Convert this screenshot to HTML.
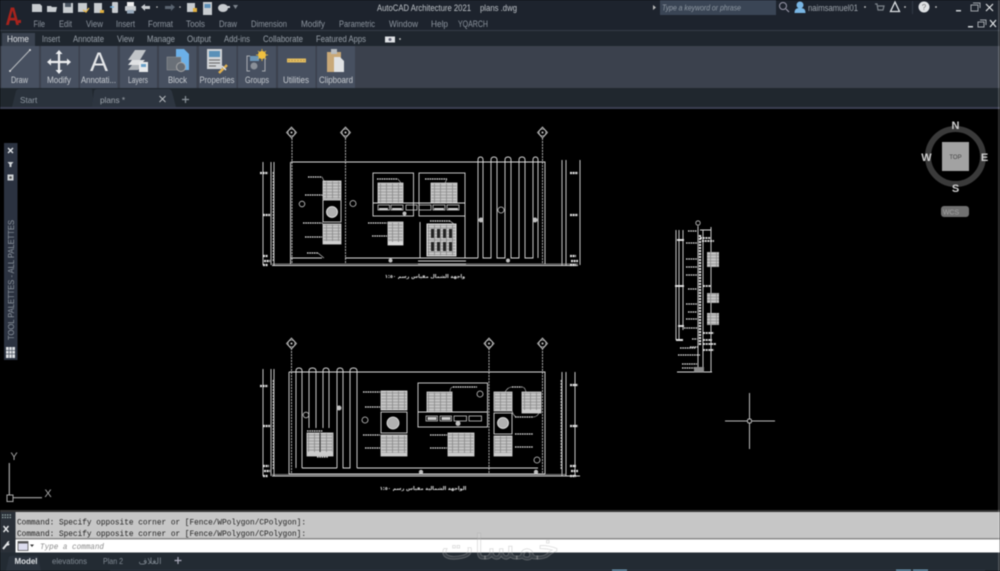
<!DOCTYPE html>
<html>
<head>
<meta charset="utf-8">
<style>
html,body{margin:0;padding:0;background:#000;width:1000px;height:571px;overflow:hidden}
svg{display:block;filter:blur(.6px)}
text{font-family:"Liberation Sans","Noto Sans CJK SC",sans-serif}
.m{font-size:8.8px;fill:#8d959f}
.r{font-size:8.8px;fill:#98a0a9}
.l{font-size:8.8px;fill:#c8ccd1;text-anchor:middle}
.b{fill:#475060}
.d{fill:none;stroke:#dcdcdc;stroke-width:.9}
.c{fill:none;stroke:#c8c8c8;stroke-width:.8}
.g{fill:none;stroke:#c4c4c4;stroke-width:.9;stroke-dasharray:2 1}
.a{fill:none;stroke:#e4e4e4;stroke-width:1.3;stroke-dasharray:1.6 .7}
.n{fill:none;stroke:#ccc;stroke-width:.6}
.w{fill:url(#win);stroke:#d8d8d8;stroke-width:.8}
.p{fill:#000;stroke:#d8d8d8;stroke-width:.9}
.q{fill:#d0d0d0}
.vc{font-size:11px;font-weight:bold;fill:#cfcfcf;text-anchor:middle}
.cm{font-family:"Liberation Mono",monospace;font-size:8.4px;fill:#222}
.i{fill:#c8ccd0}
</style>
</head>
<body>
<svg width="1000" height="571" viewBox="0 0 1000 571" xmlns="http://www.w3.org/2000/svg">
<defs>
<pattern id="win" width="6" height="6" patternUnits="userSpaceOnUse">
<rect width="6" height="6" fill="#aaaaaa"/>
<path d="M0 1.5H6M0 4.5H6" stroke="#e0e0e0" stroke-width=".8"/>
<path d="M2.5 0V6" stroke="#808080" stroke-width=".7"/>
</pattern>
</defs>

<!-- canvas -->
<rect width="1000" height="571" fill="#000"/>

<!-- title bar -->
<rect width="1000" height="30" fill="#1d232d"/>
<rect y="30" width="1000" height="1" fill="#343d47"/>
<rect y="31" width="1000" height="15" fill="#1f262e"/>

<!-- A logo -->
<text x="5.500" y="25" font-size="25" font-weight="bold" fill="#a8231d" textLength="14" lengthAdjust="spacingAndGlyphs">A</text>
<rect x="18" y="20" width="3" height="3" fill="#a8231d"/>

<!-- quick access -->
<path class="i" d="M32 4h8l2 2v6H32z"/>
<path class="i" d="M47 6h4l1 1h5l-1 5H47z"/>
<path class="i" d="M63 3h10v10H63z"/><rect x="65" y="3" width="6" height="4" fill="#4a5460"/>
<path class="i" d="M78 3h9v9h-9z"/><path d="M83 10l3 2 3-4" stroke="#e8b84a" stroke-width="1.3" fill="none"/>
<path class="i" d="M94 3h8v10h-8z"/><path d="M100 10h4v3h-4z" fill="#e0b040"/>
<rect x="112" y="2" width="6" height="11" rx="1" class="i"/><path d="M110 7h4" stroke="#6fb0e0" stroke-width="1.4"/>
<rect x="125" y="6" width="11" height="5" rx="1" class="i"/><rect x="127" y="2" width="7" height="4" fill="#eee"/><rect x="127" y="10" width="7" height="3.5" fill="#9ab"/>
<path class="i" d="M141 7l4-3v2h5v3h-5v2z"/><circle cx="157" cy="7" r=".8" fill="#ccc"/>
<path d="M175 7l-4-3v2h-6v3h6v2z" fill="#5a6470"/><circle cx="180" cy="7" r=".8" fill="#ccc"/>
<path class="i" d="M187 3h8v9h-8z"/><rect x="193" y="8" width="4" height="4" fill="#e0b040"/>
<path class="i" d="M203 2h9v13h-9z"/><rect x="204.500" y="4" width="6" height="4" fill="#5c8fb8"/>
<ellipse cx="223" cy="8" rx="5" ry="4" class="i"/><path d="M227 6h3v2h-3z" class="i"/>
<path d="M233 5h5l-2.500 4z" fill="#7d858d"/>

<text x="377" y="11" font-size="9.500" fill="#bfc4c9" textLength="94" lengthAdjust="spacingAndGlyphs">AutoCAD Architecture 2021</text>
<text x="480" y="11" font-size="9.500" fill="#bfc4c9" textLength="37" lengthAdjust="spacingAndGlyphs">plans .dwg</text>

<!-- search -->
<path d="M653 5l3 2.500-3 2.500z" fill="#bbb"/>
<rect x="660" y="0" width="116" height="15" fill="#3a4555"/>
<text x="662" y="10.500" font-size="8.200" font-style="italic" fill="#8f99a3" textLength="79" lengthAdjust="spacingAndGlyphs">Type a keyword or phrase</text>
<circle cx="783" cy="6" r="3.500" fill="none" stroke="#99a" stroke-width="1"/><path d="M786 9l3 3" stroke="#99a" stroke-width="1.200"/>
<circle cx="800" cy="5" r="3.500" fill="#79b6e4"/><path d="M794.500 13c0-4 2-5 5.500-5s5.500 1 5.500 5z" fill="#79b6e4"/>
<text x="808" y="11" font-size="8.800" fill="#a0a7ae" textLength="50" lengthAdjust="spacingAndGlyphs">naimsamuel01</text>
<circle cx="865" cy="7" r=".9" fill="#ccc"/>
<path d="M875 4h2l1 6h5l1-4h-6" stroke="#7d848b" fill="none" stroke-width="1.200"/>
<path d="M895 2l4.500 9.500h-9z" fill="none" stroke="#dfe3e6" stroke-width="1.300"/>
<circle cx="905" cy="7" r=".9" fill="#ccc"/>
<rect x="912" y="1" width="1" height="13" fill="#303844"/>
<circle cx="924" cy="7" r="5.500" fill="#dfe2e5"/><text x="924" y="10" font-size="8" fill="#777" text-anchor="middle">?</text>
<circle cx="936" cy="7" r=".9" fill="#ccc"/>
<rect x="956" y="10" width="5" height="1.500" fill="#d0d4d8"/>
<rect x="971" y="5" width="7" height="6" fill="none" stroke="#a0a5aa"/><path d="M973 3h7v5" fill="none" stroke="#a0a5aa"/>
<path d="M986 4l7 7M993 4l-7 7" stroke="#e2e4e6" stroke-width="1.200"/>
<rect x="968" y="26" width="5" height="1.500" fill="#d0d4d8"/>
<rect x="978" y="22" width="6" height="5" fill="none" stroke="#a0a5aa"/><path d="M980 20h6v5" fill="none" stroke="#a0a5aa"/>
<path d="M990 20l6 7M996 20l-6 7" stroke="#e2e4e6" stroke-width="1.200"/>

<!-- menu -->
<text class="m" x="33.500" y="27" textLength="11.500" lengthAdjust="spacingAndGlyphs">File</text>
<text class="m" x="59" y="27" textLength="13" lengthAdjust="spacingAndGlyphs">Edit</text>
<text class="m" x="86" y="27" textLength="17" lengthAdjust="spacingAndGlyphs">View</text>
<text class="m" x="116" y="27" textLength="19" lengthAdjust="spacingAndGlyphs">Insert</text>
<text class="m" x="148" y="27" textLength="25" lengthAdjust="spacingAndGlyphs">Format</text>
<text class="m" x="186" y="27" textLength="19" lengthAdjust="spacingAndGlyphs">Tools</text>
<text class="m" x="219" y="27" textLength="18" lengthAdjust="spacingAndGlyphs">Draw</text>
<text class="m" x="251" y="27" textLength="36" lengthAdjust="spacingAndGlyphs">Dimension</text>
<text class="m" x="301" y="27" textLength="24" lengthAdjust="spacingAndGlyphs">Modify</text>
<text class="m" x="339" y="27" textLength="36" lengthAdjust="spacingAndGlyphs">Parametric</text>
<text class="m" x="389" y="27" textLength="29" lengthAdjust="spacingAndGlyphs">Window</text>
<text class="m" x="431" y="27" textLength="17" lengthAdjust="spacingAndGlyphs">Help</text>
<text class="m" x="458" y="27" textLength="30" lengthAdjust="spacingAndGlyphs">YQARCH</text>

<!-- ribbon tabs -->
<rect x="2" y="33" width="33" height="13" fill="#3a424f"/>
<text x="7" y="42" font-size="8.800" fill="#dde0e3" textLength="22" lengthAdjust="spacingAndGlyphs">Home</text>
<text class="r" x="42" y="42" textLength="18" lengthAdjust="spacingAndGlyphs">Insert</text>
<text class="r" x="73" y="42" textLength="31" lengthAdjust="spacingAndGlyphs">Annotate</text>
<text class="r" x="117" y="42" textLength="17" lengthAdjust="spacingAndGlyphs">View</text>
<text class="r" x="147" y="42" textLength="28" lengthAdjust="spacingAndGlyphs">Manage</text>
<text class="r" x="187" y="42" textLength="24" lengthAdjust="spacingAndGlyphs">Output</text>
<text class="r" x="224" y="42" textLength="26" lengthAdjust="spacingAndGlyphs">Add-ins</text>
<text class="r" x="263" y="42" textLength="40" lengthAdjust="spacingAndGlyphs">Collaborate</text>
<text class="r" x="316" y="42" textLength="50" lengthAdjust="spacingAndGlyphs">Featured Apps</text>
<rect x="385" y="36.500" width="10" height="6" fill="#dfe2e5"/><circle cx="390" cy="39.500" r="1.500" fill="#667"/>
<circle cx="400" cy="39" r=".9" fill="#ccc"/>

<!-- ribbon panel -->
<rect y="46" width="1000" height="42" fill="#3b414d"/>
<rect class="b" x="1.500" y="46" width="37.500" height="42"/>
<rect class="b" x="41" y="46" width="37.500" height="42"/>
<rect class="b" x="80" y="46" width="37.500" height="42"/>
<rect class="b" x="120" y="46" width="37" height="42"/>
<rect class="b" x="159" y="46" width="37.500" height="42"/>
<rect class="b" x="199" y="46" width="37.500" height="42"/>
<rect class="b" x="238" y="46" width="38" height="42"/>
<rect class="b" x="278" y="46" width="37.500" height="42"/>
<rect class="b" x="317" y="46" width="38" height="42"/>

<!-- Draw icon -->
<path d="M10 71L30 50" stroke="#b8bcc0" stroke-width="1"/><circle cx="10" cy="71" r="1" fill="#ddd"/><circle cx="30" cy="50" r="1" fill="#ddd"/>
<!-- Modify icon -->
<path d="M59 50l3.500 4h-2.400v6.900h6.900v-2.400l4 3.500-4 3.500v-2.400h-6.900v6.900h2.400l-3.500 4-3.500-4h2.400v-6.900h-6.900v2.400l-4-3.500 4-3.500v2.400h6.900v-6.900h-2.400z" fill="#eceef0"/>
<!-- Annotate icon -->
<text x="99" y="71" font-size="27" fill="#e4e6e8" text-anchor="middle">A</text>
<!-- Layers icon -->
<path d="M128 60l7-10h11l-6 10z" fill="#c0c4c8"/>
<path d="M128 65l4-5h13l-5 5z" fill="#e0e2e4"/>
<path d="M128 70l4-5h11l-5 5z" fill="#aeb3b8"/>
<rect x="139" y="62" width="9" height="10" fill="#e8eaec"/><rect x="141" y="64" width="5" height="3" fill="#6aa0c8"/>
<!-- Block icon -->
<path d="M176 49h8l5 5v16h-13z" fill="#6cb0e8"/>
<rect x="167" y="57" width="14" height="13" fill="#6a7078" stroke="#999" stroke-width=".5"/>
<circle cx="181" cy="67" r="4.500" fill="#666c74" stroke="#a8a8a8"/>
<!-- Properties icon -->
<rect x="207" y="49" width="15" height="20" fill="#d0d3d6"/>
<rect x="209" y="51" width="11" height="6" fill="#5a90b8"/>
<path d="M209 60h11M209 63h11M209 66h7" stroke="#666" stroke-width="1"/>
<path d="M219 73l8-8" stroke="#e0b050" stroke-width="2.500"/><path d="M222 66l4 4" stroke="#ddd" stroke-width="1.500"/>
<!-- Groups icon -->
<path d="M250 56h-3v15h3M262 56h3v15h-3" fill="none" stroke="#a8adb2" stroke-width="1"/>
<rect x="250" y="56" width="9" height="5" fill="#6b96b8"/>
<circle cx="254" cy="66" r="3.500" fill="#8a9098"/>
<circle cx="262" cy="55" r="4" fill="#f0c040"/><path d="M262 49v12M256 55h12M258 51l8 8M266 51l-8 8" stroke="#f0c040" stroke-width=".8"/>
<!-- Utilities icon -->
<rect x="287" y="58.500" width="19" height="4" fill="#e0bb60"/>
<path d="M289 60v1M292 60v1M295 60v1M298 60v1M301 60v1M304 60v1" stroke="#8a7030" stroke-width=".6"/>
<!-- Clipboard icon -->
<rect x="327" y="52" width="14" height="20" fill="#c8a878"/>
<rect x="331" y="49" width="6" height="5" fill="#b8bcc0"/>
<path d="M334 57h6l4 4v11h-10z" fill="#e0e2e4"/>

<text class="l" x="19.500" y="83" textLength="17" lengthAdjust="spacingAndGlyphs">Draw</text>
<text class="l" x="59" y="83" textLength="24" lengthAdjust="spacingAndGlyphs">Modify</text>
<text class="l" x="98.500" y="83" textLength="35" lengthAdjust="spacingAndGlyphs">Annotati...</text>
<text class="l" x="138" y="83" textLength="20" lengthAdjust="spacingAndGlyphs">Layers</text>
<text class="l" x="177.500" y="83" textLength="19" lengthAdjust="spacingAndGlyphs">Block</text>
<text class="l" x="217" y="83" textLength="35" lengthAdjust="spacingAndGlyphs">Properties</text>
<text class="l" x="257" y="83" textLength="24" lengthAdjust="spacingAndGlyphs">Groups</text>
<text class="l" x="296" y="83" textLength="26" lengthAdjust="spacingAndGlyphs">Utilities</text>
<text class="l" x="336" y="83" textLength="34" lengthAdjust="spacingAndGlyphs">Clipboard</text>

<!-- file tabs -->
<rect y="88" width="1000" height="19" fill="#20272e"/>
<rect y="107" width="1000" height="2" fill="#3b3f52"/>
<path d="M12 107l4-16q1-2 3-2h73l2 18z" fill="#2a323c"/>
<path d="M92 107l2-16q1-2 3-2h72q2 0 3 3l4 15z" fill="#2d3540"/>
<text x="20" y="103" font-size="8.200" fill="#8f98a2">Start</text>
<text x="100" y="103" font-size="8.200" fill="#a0a7ae">plans *</text>
<path d="M159.500 96l6 6M165.500 96l-6 6" stroke="#b8bcc0" stroke-width="1"/>
<path d="M182 99.500h7M185.500 96v7" stroke="#8a929a" stroke-width="1.200"/>

<!-- TOOL PALETTES -->
<rect x="4" y="143" width="13.500" height="217" fill="#2b3240"/>
<path d="M8 148l5 5M13 148l-5 5" stroke="#dfe2e5" stroke-width="1.400"/>
<path d="M7.500 162h6l-2 2.500v2.500h-2v-2.500z" fill="#cfd3d6"/>
<rect x="7.500" y="174.500" width="6" height="6" fill="#cfd3d6"/><circle cx="10.500" cy="177.500" r="1.300" fill="#555"/>
<text transform="translate(14,340) rotate(-90)" font-size="8.600" fill="#8f97a0" textLength="120" lengthAdjust="spacingAndGlyphs">TOOL PALETTES - ALL PALETTES</text>
<rect x="6" y="347" width="9" height="11" fill="#dfe2e5"/>
<path d="M6 350.500h9M6 354h9M9 347v11M12 347v11" stroke="#4a5260" stroke-width=".7"/>

<!-- ELEVATION 1 -->
<g>
<path class="d" d="M263 162V265M271 162V265M274 162V265M562 160V265M566 160V265M580 160V265"/>
<path class="d" d="M272 265.500H578" stroke-width="1.500"/><path d="M272 264H578" stroke="#aaa" stroke-width=".7"/>
<path class="d" d="M291 162H545V264M290.500 162V264M291 258H322M345 258H420M465 258H478"/>
<path class="g" d="M292 138V264M345.500 138V264M542.500 138V264"/>
<g class="c"><circle cx="291.500" cy="132.500" r="3.500"/><circle cx="345.500" cy="132.500" r="3.500"/><circle cx="542.500" cy="132.500" r="3.500"/>
<path d="M291.500 127l5 5.500-5 5.500-5-5.500zM345.500 127l5 5.500-5 5.500-5-5.500zM542.500 127l5 5.500-5 5.500-5-5.500z"/></g>
<g class="q"><circle cx="291.500" cy="132.500" r="1"/><circle cx="345.500" cy="132.500" r="1"/><circle cx="542.500" cy="132.500" r="1"/></g>

<rect class="w" x="323" y="181" width="18" height="18"/>
<rect class="p" x="323" y="200" width="18" height="22"/>
<circle cx="332" cy="212" r="5.500" fill="#b0b0b0" stroke="#eee" stroke-width=".8"/>
<rect class="w" x="323" y="224" width="18" height="20"/>
<rect x="323" y="241" width="18" height="3" fill="#d0d0d0"/>

<rect class="p" x="373" y="173" width="40.500" height="43"/>
<rect class="p" x="419" y="173" width="46" height="43"/>
<path class="d" d="M373 203H465"/>
<rect class="w" x="378" y="183" width="25" height="20"/>
<rect class="w" x="431" y="183" width="26" height="20"/>
<g class="c" stroke-width=".8">
<rect x="378" y="205" width="11.500" height="5"/><rect x="391" y="205" width="12" height="5"/><rect x="406" y="205" width="11" height="5"/><rect x="419" y="205" width="12" height="5"/><rect x="433" y="205" width="12" height="5"/><rect x="447" y="205" width="12" height="5"/></g>
<rect x="379" y="208" width="9" height="2" fill="#ccc"/><rect x="392" y="208" width="10" height="2" fill="#ccc"/><rect x="434" y="208" width="10" height="2" fill="#ccc"/><rect x="448" y="208" width="10" height="2" fill="#ccc"/>
<rect class="w" x="388" y="222" width="15" height="23"/>
<rect x="388" y="242" width="15" height="3" fill="#ddd"/>

<rect x="427" y="224" width="29" height="32" fill="url(#win)" stroke="#eee" stroke-width=".9"/>
<g fill="#222"><rect x="431" y="229" width="3" height="9"/><rect x="437" y="229" width="3" height="9"/><rect x="443" y="229" width="3" height="9"/><rect x="449" y="229" width="3" height="9"/><rect x="431" y="242" width="3" height="9"/><rect x="437" y="242" width="3" height="9"/><rect x="443" y="242" width="3" height="9"/><rect x="449" y="242" width="3" height="9"/></g>
<path class="d" d="M420 258V222M465 258V216M418 258H466M418 261H466M418 264H466"/>

<path class="d" d="M478 258V160q0-3 2.500-3t2.500 3V258H491V160q0-3 3-3t3 3V258H505V160q0-3 3-3t3 3V258H519V160q0-3 3-3t3 3V258H533V160q0-3 2.500-3t2.500 3V258"/>

<g class="a">
<path d="M308 177H322M305 195H322M303 223H322M305 237H322M307 253H318"/>
<path d="M377 179H398M425 179H447M368 223H387M372 236H387M430 221H450"/>
</g>
<path class="n" d="M322 177l2 4M322 195l2 2M322 223l2 2M318 253l6 5M398 179l3 4M447 179l-2 4M450 221l4 3"/>
<g class="c"><circle cx="302" cy="204" r="2.800"/><circle cx="353" cy="203.500" r="3"/><circle cx="501" cy="210" r="3"/></g>
<g fill="#c0c0c0"><circle cx="404.500" cy="213.500" r="2"/><circle cx="481" cy="220" r="2.500"/><circle cx="535" cy="220" r="2.500"/><circle cx="390.500" cy="260.500" r="2"/><circle cx="508" cy="260.500" r="2"/></g>

<g fill="none" stroke="#e4e4e4" stroke-width="2.200" stroke-dasharray="2 .6">
<path d="M260 173H268M263 215H270M263 256H268M264 261H270M263 265H268"/>
<path d="M570 173H578M570 215H578M570 256H576M571 261H578M570 265H576"/></g>
<path class="g" d="M273 172V262M562 165V262"/>

<text x="425" y="278" font-size="5" font-weight="bold" fill="#dcdcdc" text-anchor="middle" style="font-family:'DejaVu Sans',sans-serif" direction="rtl">واجهة الشمال مقياس رسم ١:٥٠</text>
</g>

<!-- ELEVATION 2 -->
<g>
<path class="d" d="M263 369V476M271 369V476M274 369V476M562 372V476M566 372V476M575 372V476"/>
<path class="d" d="M272 476H580" stroke-width="1.500"/><path d="M272 474.500H566" stroke="#aaa" stroke-width=".7"/>
<path class="d" d="M289 372H545V474M289 372V474H545M302 468H337M357 468H538"/>
<path class="g" d="M291.500 348V474M489 348V474M542.500 348V474"/>
<g class="c"><circle cx="291.500" cy="343.500" r="3.500"/><circle cx="489" cy="343.500" r="3.500"/><circle cx="542.500" cy="343.500" r="3.500"/>
<path d="M291.500 338l5 5.500-5 5.500-5-5.500zM489 338l5 5.500-5 5.500-5-5.500zM542.500 338l5 5.500-5 5.500-5-5.500z"/></g>
<g class="q"><circle cx="291.500" cy="343.500" r="1"/><circle cx="489" cy="343.500" r="1"/><circle cx="542.500" cy="343.500" r="1"/></g>

<path class="d" d="M296 468V371q0-3 3-3t3 3V468M309 428V371q0-3 3.500-3t3.500 3V428M323 428V371q0-3 3-3t3 3V428M337 468V371q0-3 3-3t3 3V468H350V371q0-3 3.500-3t3.500 3V468"/>
<rect class="w" x="307" y="433" width="26" height="23"/>
<rect x="307" y="452" width="26" height="4" fill="#ccc"/>
<path d="M320 433V452" stroke="#333" stroke-width="1"/>

<rect class="w" x="381" y="391" width="26" height="19"/>
<rect class="p" x="381" y="412" width="26" height="21"/>
<circle cx="393" cy="423" r="6" fill="#b0b0b0" stroke="#eee" stroke-width=".8"/>
<rect class="w" x="381" y="435" width="26" height="21"/>
<rect x="381" y="453" width="26" height="3" fill="#ccc"/>

<rect class="p" x="418" y="383" width="69.500" height="44"/>
<path class="d" d="M418 412H487"/>
<rect class="w" x="427" y="392" width="25" height="20"/>
<g class="c"><rect x="426" y="416" width="11.500" height="5"/><rect x="440" y="416" width="11.500" height="5"/><rect x="454" y="416" width="12.500" height="5"/><rect x="469" y="416" width="12.500" height="5"/></g>
<rect x="427.500" y="417" width="9" height="3" fill="#ccc"/><rect x="441.500" y="417" width="9" height="3" fill="#ccc"/>
<rect class="w" x="448" y="433" width="26" height="23"/>
<rect x="448" y="453" width="26" height="3" fill="#ccc"/>

<rect class="w" x="494" y="392" width="18" height="19"/>
<rect class="p" x="494" y="413" width="18" height="21"/>
<circle cx="503" cy="423" r="5.500" fill="#b0b0b0" stroke="#eee" stroke-width=".8"/>
<rect class="w" x="494" y="436" width="18" height="20"/>
<rect x="494" y="453" width="18" height="3" fill="#ccc"/>
<rect class="w" x="522" y="392" width="19" height="21"/>
<rect x="522" y="410" width="19" height="3" fill="#ccc"/>

<g class="a">
<path d="M363 392H380M365 407H380M363 435H380M365 448H380"/>
<path d="M453 387H477M430 435H447M430 448H447"/>
<path d="M512 387H522M515 417H533M515 434H533M515 447H533"/>
<path d="M307 431H323M317 457H328"/>
</g>
<path class="n" d="M453 387q-3 0-3 5M505 392q3-5 7-5M522 387q3 0 4 5M512 411q2 6 5 6M533 417q4 0 6-4"/>
<g class="c"><circle cx="306" cy="415" r="2.800"/><circle cx="365" cy="420" r="3"/><circle cx="480" cy="394" r="3"/><circle cx="537" cy="460" r="3"/></g>
<g fill="#c0c0c0"><circle cx="339" cy="408" r="2.500"/><circle cx="458" cy="423.500" r="2.500"/><circle cx="421" cy="472" r="2.200"/><circle cx="536" cy="472" r="2.200"/></g>

<g fill="none" stroke="#e4e4e4" stroke-width="2.200" stroke-dasharray="2 .6">
<path d="M260 386H268M263 426H270M263 466H269M264 471H270M263 476H268"/>
<path d="M570 385H578M570 426H578M570 466H576M571 471H578M570 476H576"/></g>
<path class="g" d="M273 380V470M561 380V470"/>

<text x="423" y="490" font-size="5" font-weight="bold" fill="#dcdcdc" text-anchor="middle" style="font-family:'DejaVu Sans',sans-serif" direction="rtl">الواجهة الشمالية  مقياس رسم ١:٥٠</text>
</g>

<!-- SECTION -->
<g>
<circle cx="698" cy="223" r="2.200" fill="none" stroke="#ccc" stroke-width=".8"/>
<path class="d" d="M676 230V340M679 230V340M683 230V330M698 226V372M703 230V372M711 227V372M700 230H711"/>
<path d="M676 340H683" stroke="#ddd" stroke-width="2"/>
<path d="M700 235V345" stroke="#eee" stroke-width="2.200" stroke-dasharray="2 1"/>
<path class="d" d="M677 372H712" stroke-width="1.400"/>
<rect x="707" y="252" width="12" height="15" fill="url(#win)"/>
<rect x="707" y="293" width="12" height="10" fill="url(#win)"/>
<rect x="707" y="313" width="12" height="12" fill="url(#win)"/>
<path d="M700 238H711M702 241H714M703 286H711M703 333H714M703 340H712M703 344H716M703 350H714" stroke="#eee" stroke-width="1.800" stroke-dasharray="2 .7"/>
<path class="a" d="M688 231H697M686 243H697M686 259H697M686 267H697M686 275H697M688 289H697M686 304H697M688 312H697M686 319H697M684 328H697M692 339H697M690 347H698M680 348H696M678 355H700M682 364H697M682 368H697"/>
<path d="M677 240H684M675 286H684M678 326H684" stroke="#eee" stroke-width="1.800"/>
<path d="M694 367h10v5h-10z" fill="#888"/>
</g>

<!-- crosshair -->
<path d="M749.500 393V418.500M749.500 423.500V449M725 421H747M752 421H775" stroke="#bdbdbd" stroke-width="1"/>
<rect x="747.500" y="419" width="4" height="4" rx="1.500" fill="none" stroke="#bdbdbd" stroke-width=".9"/>

<!-- UCS -->
<path d="M9.300 463V495M13 497.700H42" stroke="#a8a8a8" stroke-width="1.200"/>
<rect x="7" y="495" width="6" height="6.500" fill="none" stroke="#a8a8a8" stroke-width="1"/>
<text x="14" y="460" font-size="11" fill="#a8a8a8" text-anchor="middle">Y</text>
<text x="48" y="497" font-size="11" fill="#a8a8a8" text-anchor="middle">X</text>

<!-- viewcube -->
<circle cx="955.500" cy="156.500" r="27.500" fill="none" stroke="#3a3a3a" stroke-width="6"/>
<rect x="942" y="142" width="27" height="29" fill="#a2a2a2"/>
<text x="955.500" y="159" font-size="6" fill="#444" text-anchor="middle">TOP</text>
<text class="vc" x="955.500" y="129">N</text>
<text class="vc" x="955.500" y="192">S</text>
<text class="vc" x="926.500" y="161">W</text>
<text class="vc" x="984.500" y="161">E</text>
<rect x="941" y="206" width="28" height="11" rx="3" fill="#707070"/>
<text x="951" y="214.500" font-size="7" fill="#a0a0a0" text-anchor="middle">WCS</text>

<!-- command -->
<rect y="510" width="1000" height="2" fill="#333"/>
<rect y="512" width="1000" height="27" fill="#c6c6c6"/>
<rect y="538" width="1000" height="1.500" fill="#8a8a8a"/>
<rect y="539.500" width="1000" height="13" fill="#fff"/>
<rect x="0" y="512" width="15.500" height="41" fill="#2a3038"/>
<path d="M2 515h10M2 517.500h10" stroke="#9aa" stroke-width="1.200" stroke-dasharray="1.500 1"/>
<path d="M3.500 526l5 6M8.500 526l-5 6" stroke="#e4e6e8" stroke-width="1.400"/>
<path d="M3 549l4-5" stroke="#e4e6e8" stroke-width="2"/><path d="M6.500 543q1-2 3-2l-1 2 1 1q0 2-3 1.500" fill="#e4e6e8"/>
<text class="cm" x="17" y="524.500" textLength="289" lengthAdjust="spacingAndGlyphs">Command: Specify opposite corner or [Fence/WPolygon/CPolygon]:</text>
<text class="cm" x="17" y="536" textLength="289" lengthAdjust="spacingAndGlyphs">Command: Specify opposite corner or [Fence/WPolygon/CPolygon]:</text>
<rect x="18" y="541.500" width="10" height="9" fill="#dde" stroke="#555" stroke-width=".8"/><rect x="18" y="541.500" width="10" height="2" fill="#555"/>
<path d="M30 544.500h4l-2 2.500z" fill="#333"/>
<text x="40" y="549" font-size="8" font-style="italic" fill="#8b8b8b" style="font-family:'Liberation Mono',monospace" textLength="64" lengthAdjust="spacingAndGlyphs">Type a command</text>

<!-- status bar -->
<rect y="552.500" width="1000" height="18.500" fill="#232b33"/>
<path d="M6 571l3-14q1-1 3-1h26l3 15z" fill="#2b333d"/>
<text x="14.500" y="564" font-size="8.500" font-weight="bold" fill="#e0e3e6" textLength="23" lengthAdjust="spacingAndGlyphs">Model</text>
<text x="52" y="564" font-size="8.500" fill="#838c95" textLength="35" lengthAdjust="spacingAndGlyphs">elevations</text>
<text x="103" y="564" font-size="8.500" fill="#838c95" textLength="20" lengthAdjust="spacingAndGlyphs">Plan 2</text>
<text x="150" y="564" font-size="8.500" fill="#838c95" text-anchor="middle" style="font-family:'DejaVu Sans',sans-serif">الغلاف</text>
<path d="M174.500 560.500h7M178 557v7" stroke="#aab" stroke-width="1.200"/>
<path d="M110 570.500H985" stroke="#333d47" stroke-width="1"/>
<rect x="612" y="569.500" width="15" height="1.500" fill="#6f9bb8"/><rect x="896" y="569.500" width="15" height="1.500" fill="#6f9bb8"/><rect x="913" y="569.500" width="15" height="1.500" fill="#6f9bb8"/>

<!-- watermark -->
<text x="500" y="559" font-size="34" text-anchor="middle" fill="#fff" fill-opacity=".1" stroke="#a8a8a8" stroke-opacity=".45" stroke-width=".7" textLength="119" lengthAdjust="spacingAndGlyphs" style="font-family:'DejaVu Sans',sans-serif">خمسات</text>

<!-- right edge -->
<rect x="998" y="0" width="2" height="571" fill="#e8e8e8" fill-opacity=".2"/>
</svg>
</body>
</html>
